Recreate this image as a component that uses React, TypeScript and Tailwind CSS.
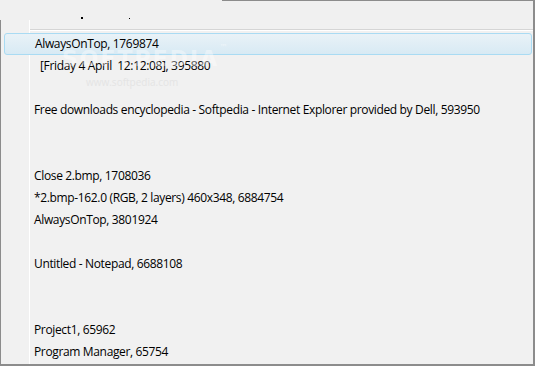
import React from 'react';

interface Row {
  text: string;
  selected?: boolean;
  indent?: boolean;
}

const rows: Row[] = [
  { text: 'AlwaysOnTop, 1769874', selected: true },
  { text: '[Friday 4 April\u00a0 12:12:08], 395880', indent: true },
  { text: '' },
  { text: 'Free downloads encyclopedia - Softpedia - Internet Explorer provided by Dell, 593950' },
  { text: '' },
  { text: '' },
  { text: 'Close 2.bmp, 1708036' },
  { text: '*2.bmp-162.0 (RGB, 2 layers) 460x348, 6884754' },
  { text: 'AlwaysOnTop, 3801924' },
  { text: '' },
  { text: 'Untitled - Notepad, 6688108' },
  { text: '' },
  { text: '' },
  { text: 'Project1, 65962' },
  { text: 'Program Manager, 65754' },
];

const App: React.FC = () => {
  return (
    <div className="w-[535px] h-[366px] bg-[#f0f0f0] flex flex-col relative overflow-hidden font-['Open_Sans',sans-serif] text-[12px] tracking-[-0.35px] text-black">
      {/* clipped strip above the list */}
      <div className="h-[20px] flex shrink-0">
        <div className="w-[222px] flex items-end">
          <div className="ml-[81px] mb-px w-[2px] h-[2px] bg-black" />
          <div className="ml-[46px] mb-px w-px h-px bg-black" />
        </div>
        <div className="flex-1 border-t border-r-2 border-[#8c8c8c]" />
      </div>

      {/* list frame */}
      <div className="flex-1 flex flex-col border-l border-r-2 border-b-2 border-[#8c8c8c] bg-[#f1f1f1]">
        <div className="h-[9px] flex shrink-0">
          <div className="w-[29px] border-r border-white" />
          <div className="flex-1" />
        </div>
        <div className="h-[2px] flex shrink-0">
          <div className="w-[29px] border-r border-white" />
          <div className="flex-1 border-t border-[#d6d6d6] bg-white" />
        </div>
        <div className="h-[2px] flex shrink-0">
          <div className="w-[29px] border-r border-white" />
        </div>

        {rows.map((r, i) =>
          r.selected ? (
            <div
              key={i}
              className="h-[22px] shrink-0 ml-[3px] mr-px rounded-[3px] border border-[#a9dbf3] bg-gradient-to-b from-[#e9f2f7] to-[#d8eaf4] flex items-center pl-[30px] leading-none"
            >
              {r.text}
            </div>
          ) : (
            <div key={i} className="h-[22px] shrink-0 flex">
              <div className="w-[29px] border-r border-white" />
              <div className={`flex items-center leading-none whitespace-pre ${r.indent ? 'pl-[10px]' : 'pl-[4px]'}`}>
                {r.text}
              </div>
            </div>
          )
        )}
        <div className="flex-1 flex">
          <div className="w-[29px] border-r border-white" />
        </div>
      </div>

      {/* watermark */}
      <div className="absolute left-[62px] top-[42px] text-[22px] font-bold tracking-[2px] text-white/40 pointer-events-none font-['DejaVu_Sans',sans-serif]">
        SOFTPEDIA<span className="text-[8px] align-top">™</span>
      </div>
      <div className="absolute left-[86px] top-[75px] text-[10px] tracking-normal text-[#e4e4e4] pointer-events-none">
        www.softpedia.com
      </div>
    </div>
  );
};

export default App;
